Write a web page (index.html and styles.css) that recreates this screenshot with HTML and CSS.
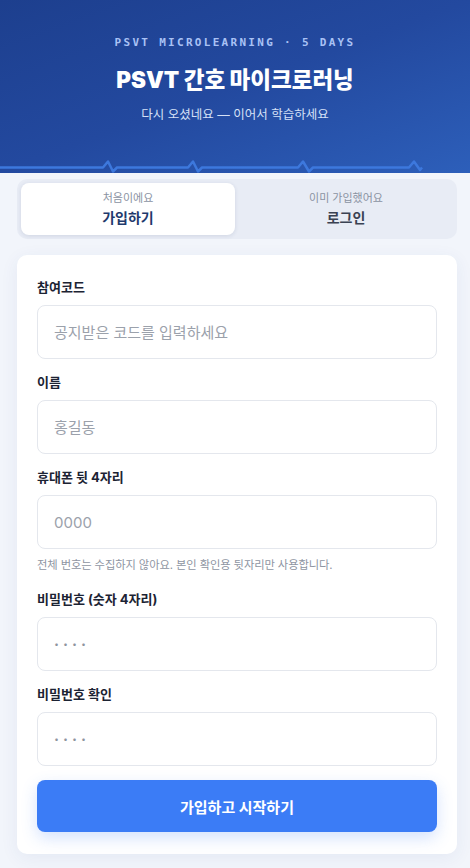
FILE: index.html
```html
<!DOCTYPE html>
<html lang="ko">
<head>
<meta charset="utf-8">
<title>PSVT 간호 마이크로러닝</title>
<link rel="stylesheet" href="styles.css">
</head>
<body>
<header class="hero">
  <div class="eyebrow">PSVT MICROLEARNING · 5 DAYS</div>
  <h1 class="title">PSVT 간호 마이크로러닝</h1>
  <p class="subtitle">다시 오셨네요 — 이어서 학습하세요</p>
  <svg class="ecg" width="470" height="20" viewBox="0 0 470 20" aria-hidden="true">
    <path d="M0 14.5 H103 L108 8.5 L113 18.5 L117 14.5 H188 L193 8.5 L198 18.5 L202 14.5 H298 L303 8.5 L309 18.5 L313 14.5 H409 L414 8.5 L420 17 L422 14.5" fill="none" stroke="#3d78dd" stroke-width="2.5" stroke-linejoin="round"/>
  </svg>
</header>
<main class="main">
  <div class="tabs">
    <button class="tab active" type="button">
      <span class="tab-sub">처음이에요</span>
      <span class="tab-main">가입하기</span>
    </button>
    <button class="tab" type="button">
      <span class="tab-sub">이미 가입했어요</span>
      <span class="tab-main">로그인</span>
    </button>
  </div>
  <form class="card">
    <div class="field">
      <label class="label">참여코드</label>
      <input class="input" type="text" placeholder="공지받은 코드를 입력하세요">
    </div>
    <div class="field">
      <label class="label">이름</label>
      <input class="input" type="text" placeholder="홍길동">
    </div>
    <div class="field">
      <label class="label">휴대폰 뒷 4자리</label>
      <input class="input" type="text" placeholder="0000">
      <p class="hint">전체 번호는 수집하지 않아요. 본인 확인용 뒷자리만 사용합니다.</p>
    </div>
    <div class="field">
      <label class="label">비밀번호 (숫자 4자리)</label>
      <input class="input pw" type="text" placeholder="····">
    </div>
    <div class="field">
      <label class="label">비밀번호 확인</label>
      <input class="input pw" type="text" placeholder="····">
    </div>
    <button class="submit" type="button">가입하고 시작하기</button>
  </form>
</main>
</body>
</html>
```
FILE: styles.css
```css
* { box-sizing: border-box; }
html, body { margin: 0; padding: 0; }
body {
  background: #f2f5fb;
  font-family: "Inter", "Noto Sans CJK KR", sans-serif;
  color: #1c2333;
  width: 470px;
  min-height: 868px;
}
.hero {
  position: relative;
  height: 173px;
  padding-top: 35px;
  text-align: center;
  background: linear-gradient(160deg, #1d3f8e 0%, #23499f 50%, #2d5fba 100%);
  overflow: hidden;
}
.eyebrow {
  font-family: "DejaVu Sans Mono", monospace;
  font-weight: bold;
  font-size: 11px;
  line-height: 16px;
  letter-spacing: 2.3px;
  color: #a9c2f5;
}
.title {
  margin: 14px 0 0;
  font-size: 22.5px;
  line-height: 30px;
  font-weight: 900;
  color: #ffffff;
  letter-spacing: 0;
}
.subtitle {
  margin: 11px 0 0;
  font-size: 12.5px;
  line-height: 18px;
  color: #d6e1f7;
}
.ecg {
  position: absolute;
  left: 0;
  bottom: 0;
  display: block;
}
.main {
  padding: 6px 13px 0 17px;
}
.tabs {
  display: grid;
  grid-template-columns: 1fr 1fr;
  gap: 4px;
  padding: 4px;
  background: #e8ecf5;
  border-radius: 10px;
}
.tab {
  display: flex;
  flex-direction: column;
  align-items: center;
  gap: 2px;
  height: 52px;
  padding: 8px 0 0;
  border: 0;
  border-radius: 8px;
  background: transparent;
  font-family: inherit;
  cursor: pointer;
}
.tab.active {
  background: #ffffff;
  box-shadow: 0 1px 4px rgba(30, 50, 100, 0.12);
}
.tab-sub {
  font-size: 11px;
  line-height: 15px;
  color: #8a92a2;
}
.tab-main {
  font-size: 14px;
  line-height: 20px;
  font-weight: 700;
  color: #3a4253;
}
.tab.active .tab-main { color: #1f3a6d; }
.card {
  margin-top: 16px;
  display: flex;
  flex-direction: column;
  gap: 14px;
  padding: 23px 20px 22px;
  background: #ffffff;
  border-radius: 10px;
  box-shadow: 0 4px 18px rgba(40, 70, 140, 0.07);
}
.field {
  display: flex;
  flex-direction: column;
}
.label {
  font-size: 13px;
  line-height: 18px;
  font-weight: 700;
  color: #1c2333;
  margin-bottom: 9px;
}
.input {
  height: 54px;
  width: 100%;
  padding: 0 16px;
  border: 1px solid #e4e7ed;
  border-radius: 8px;
  background: #ffffff;
  font-family: inherit;
  font-size: 15px;
  color: #1c2333;
  outline: none;
}
.input::placeholder { color: #9ba1ab; }
.input.pw::placeholder {
  color: #8e949e;
  letter-spacing: 4px;
  font-weight: 700;
}
.hint {
  margin: 7px 0 2px;
  font-size: 11.3px;
  line-height: 18px;
  color: #8e95a2;
  letter-spacing: -0.1px;
}
.submit {
  height: 52px;
  border: 0;
  border-radius: 8px;
  background: #3b7cf6;
  color: #ffffff;
  font-family: inherit;
  font-size: 15px;
  font-weight: 700;
  box-shadow: 0 6px 16px rgba(59, 124, 246, 0.22);
  cursor: pointer;
}
```
